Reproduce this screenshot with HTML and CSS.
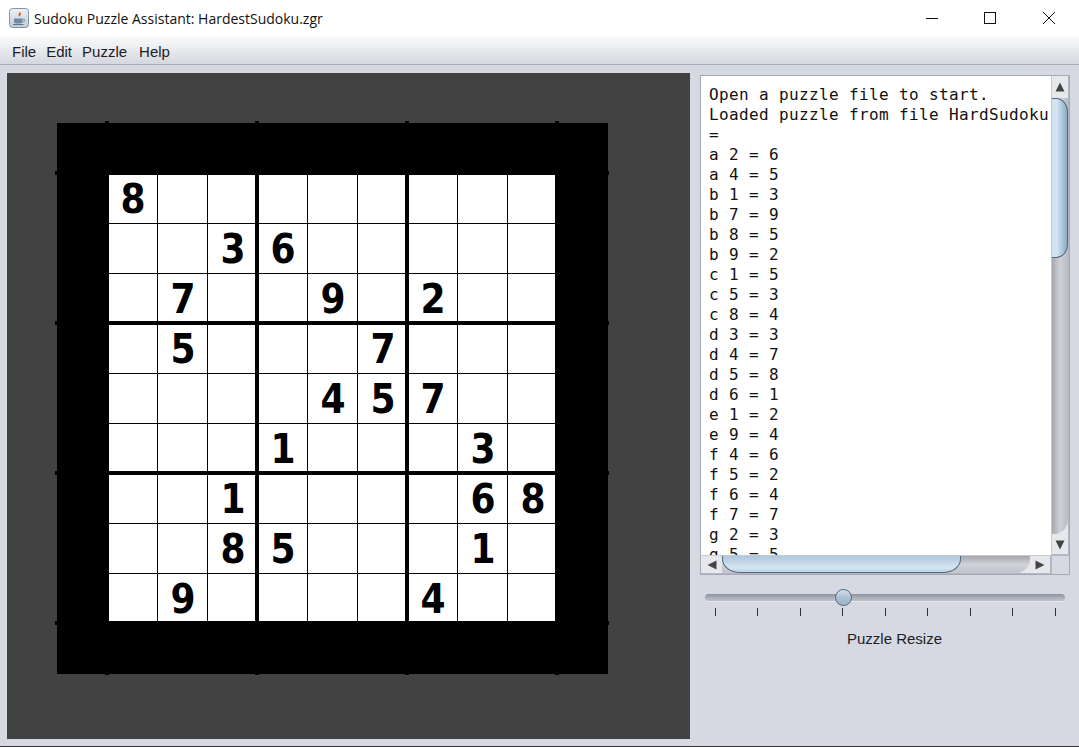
FILE: index.html
```html
<!DOCTYPE html>
<html lang="en">
<head>
<meta charset="utf-8">
<title>Sudoku Puzzle Assistant: HardestSudoku.zgr</title>
<link rel="stylesheet" href="styles.css">
</head>
<body>
<div class="window">
  <header class="titlebar">
    <svg class="app-icon" width="20" height="20" viewBox="0 0 20 20">
      <defs><linearGradient id="tile" x1="0" y1="0" x2="0" y2="1"><stop offset="0" stop-color="#eef1f5"/><stop offset="1" stop-color="#c3cbd6"/></linearGradient></defs>
      <rect x="0.5" y="0.5" width="19" height="19" rx="3" fill="url(#tile)" stroke="#7f94ab"/>
      <path d="M10.5 3c1.4 1.6-1.8 2.8-.8 4.6.3.5.6.9.8 1.3-.3-1.4 2.2-2.3 1.2-4-.3-.6-.8-1.200-1.200-1.900z" fill="#d9531e"/>
      <path d="M5 10.500h8.500v3c0 1.300-1 2-2.200 2H7.200C6 15.500 5 14.800 5 13.500z" fill="#6f8aa3"/>
      <path d="M13.500 11.200h1.300c1.200 0 1.200 2.400-.2 2.400h-1.200" fill="none" stroke="#6f8aa3"/>
      <path d="M4 16.500h10.500" stroke="#5a7590"/>
    </svg>
    <span class="title-text">Sudoku Puzzle Assistant: HardestSudoku.zgr</span>
    <div class="win-controls">
      <button class="win-btn" aria-label="Minimize"><svg width="14" height="14" viewBox="0 0 14 14"><path d="M1 7.500h12" stroke="#111" fill="none"/></svg></button>
      <button class="win-btn" aria-label="Maximize"><svg width="14" height="14" viewBox="0 0 14 14"><rect x="1.500" y="1.500" width="11" height="11" stroke="#111" fill="none"/></svg></button>
      <button class="win-btn win-close" aria-label="Close"><svg width="14" height="14" viewBox="0 0 14 14"><path d="M1 1l12 12M13 1L1 13" stroke="#111" fill="none"/></svg></button>
    </div>
  </header>
  <nav class="menubar">
    <span class="menu-item">File</span>
    <span class="menu-item">Edit</span>
    <span class="menu-item">Puzzle</span>
    <span class="menu-item">Help</span>
  </nav>
  <main class="content">
    <section class="puzzle-panel">
      <div class="board">
        <svg class="ticks" width="554" height="554" viewBox="0 0 554 554"><path d="M50 0h4v554h-4zM200 0h4v554h-4zM350 0h4v554h-4zM500 0h4v554h-4zM0 50h554v4H0zM0 200h554v4H0zM0 350h554v4H0zM0 500h554v4H0z" fill="#000"/></svg>
        <div class="grid">
          <div class="cell">8</div><div class="cell"></div><div class="cell"></div><div class="cell"></div><div class="cell"></div><div class="cell"></div><div class="cell"></div><div class="cell"></div><div class="cell"></div>
          <div class="cell"></div><div class="cell"></div><div class="cell">3</div><div class="cell">6</div><div class="cell"></div><div class="cell"></div><div class="cell"></div><div class="cell"></div><div class="cell"></div>
          <div class="cell"></div><div class="cell">7</div><div class="cell"></div><div class="cell"></div><div class="cell">9</div><div class="cell"></div><div class="cell">2</div><div class="cell"></div><div class="cell"></div>
          <div class="cell"></div><div class="cell">5</div><div class="cell"></div><div class="cell"></div><div class="cell"></div><div class="cell">7</div><div class="cell"></div><div class="cell"></div><div class="cell"></div>
          <div class="cell"></div><div class="cell"></div><div class="cell"></div><div class="cell"></div><div class="cell">4</div><div class="cell">5</div><div class="cell">7</div><div class="cell"></div><div class="cell"></div>
          <div class="cell"></div><div class="cell"></div><div class="cell"></div><div class="cell">1</div><div class="cell"></div><div class="cell"></div><div class="cell"></div><div class="cell">3</div><div class="cell"></div>
          <div class="cell"></div><div class="cell"></div><div class="cell">1</div><div class="cell"></div><div class="cell"></div><div class="cell"></div><div class="cell"></div><div class="cell">6</div><div class="cell">8</div>
          <div class="cell"></div><div class="cell"></div><div class="cell">8</div><div class="cell">5</div><div class="cell"></div><div class="cell"></div><div class="cell"></div><div class="cell">1</div><div class="cell"></div>
          <div class="cell"></div><div class="cell">9</div><div class="cell"></div><div class="cell"></div><div class="cell"></div><div class="cell"></div><div class="cell">4</div><div class="cell"></div><div class="cell"></div>
        </div>
      </div>
    </section>
    <aside class="side">
      <div class="scrollpane">
        <pre class="log">Open a puzzle file to start.
Loaded puzzle from file HardSudoku
=
a 2 = 6
a 4 = 5
b 1 = 3
b 7 = 9
b 8 = 5
b 9 = 2
c 1 = 5
c 5 = 3
c 8 = 4
d 3 = 3
d 4 = 7
d 5 = 8
d 6 = 1
e 1 = 2
e 9 = 4
f 4 = 6
f 5 = 2
f 6 = 4
f 7 = 7
g 2 = 3
g 5 = 5</pre>
        <div class="vbar">
          <div class="vbtn"><svg width="10" height="10" viewBox="0 0 10 10"><path d="M5 0.500L9.500 9.500H.5z" fill="#444"/></svg></div>
          <div class="vtrack"><div class="vthumb"></div></div>
          <div class="vbtn vbtn-down"><svg width="10" height="10" viewBox="0 0 10 10"><path d="M5 9.500L9.500 .5H.5z" fill="#444"/></svg></div>
        </div>
        <div class="hbar">
          <div class="hbtn"><svg width="10" height="10" viewBox="0 0 10 10"><path d="M.5 5L9.500 .5v9z" fill="#444"/></svg></div>
          <div class="htrack"><div class="hthumb"></div></div>
          <div class="hbtn hbtn-right"><svg width="10" height="10" viewBox="0 0 10 10"><path d="M9.500 5L.5 .5v9z" fill="#444"/></svg></div>
        </div>
        <div class="corner"></div>
      </div>
      <div class="slider">
        <div class="slider-track"><div class="slider-thumb"></div></div>
        <div class="slider-ticks"><i></i><i></i><i></i><i></i><i></i><i></i><i></i><i></i><i></i></div>
      </div>
      <div class="slider-label">Puzzle Resize</div>
    </aside>
  </main>
</div>
</body>
</html>
```
FILE: styles.css
```css
* { box-sizing: border-box; }
html, body { margin: 0; padding: 0; }
body { width: 1079px; height: 747px; overflow: hidden; background: #d6d9e2; }
.window { display: flex; flex-direction: column; height: 747px; border-bottom: 1px solid #333; color: #111; }

.titlebar { display: flex; align-items: center; height: 37px; flex: none; background: #fff; padding-left: 9px; }
.app-icon { flex: none; margin-top: -1px; }
.title-text { margin-left: 5px; font: 14px "Open Sans", "Liberation Sans", sans-serif; color: #111; white-space: nowrap; margin-top: -1px; }
.win-controls { margin-left: auto; display: flex; margin-top: -2px; }
.win-btn { width: 58px; height: 30px; padding: 0; border: 0; background: none; display: flex; align-items: center; justify-content: center; }
.win-close { width: 60px; }

.menubar { display: flex; height: 28px; flex: none; align-items: center; padding: 2px 0 0 12px; gap: 10px; background: linear-gradient(#f8f9f9, #f1f2f4 25%, #d4d7de); border-bottom: 1px solid #a9adb9; font: 15px "Liberation Sans", sans-serif; color: #1c1c24; }
.menu-item:last-child { margin-left: 2px; }

.content { flex: 1; display: flex; min-height: 0; padding: 8px 0 7px 7px; }
.puzzle-panel { width: 683px; height: 666px; flex: none; background: #424242; padding: 50px 0 0 50px; }
.board { position: relative; width: 551px; height: 551px; background: #000; padding: 52px 0 0 52px; }
.ticks { position: absolute; left: -2px; top: -2px; }
.grid { position: relative; width: 446px; height: 446px; display: grid; background: #fff; grid-template-columns: 49px 50px 51px 49px 50px 51px 49px 50px 47px; grid-template-rows: 49px 50px 51px 49px 50px 51px 49px 50px 47px; }
.cell { display: flex; align-items: center; justify-content: center; border-right: 1px solid #000; border-bottom: 1px solid #000; font: bold 40px "DejaVu Sans", sans-serif; font-stretch: condensed; color: #000; line-height: 1; overflow: hidden; }
.cell:nth-child(3n+2) { padding-left: 1px; }
.cell:nth-child(9n+3), .cell:nth-child(9n+6) { border-right-width: 4px; padding-left: 3px; }
.cell:nth-child(9n) { border-right: 0; padding-left: 3px; }
.cell:nth-child(n+19):nth-child(-n+27), .cell:nth-child(n+46):nth-child(-n+54) { border-bottom-width: 4px; padding-top: 3px; }
.cell:nth-child(n+73) { border-bottom: 0; padding-top: 3px; }

.side { flex: 1; min-width: 0; padding: 2px 9px 0 10px; }
.scrollpane { display: grid; grid-template-columns: 350px 18px; grid-template-rows: 479px 19px; width: 370px; height: 500px; border: 1px solid #a5a9b6; background: #d6d9e2; }
.log { margin: 0; padding: 9px 0 0 8px; background: #fff; overflow: hidden; font: 16px/20px "DejaVu Sans Mono", monospace; letter-spacing: .37px; color: #111; white-space: pre; }

.vbar { display: flex; flex-direction: column; background: #e6e8ec; border-left: 1px solid #c6c9d1; border-right: 1px solid #b4b8c3; overflow: hidden; }
.vbtn { flex: none; height: 22px; display: flex; justify-content: center; padding-top: 6px; background: #e6e8ec; }
.vbtn-down { height: 21px; padding-top: 6px; border-bottom: 1px solid #b4b8c3; background: #e6e8ec; }
.vtrack { flex: 1; background: linear-gradient(90deg, #a6a8ae, #cfd1d7 50%, #b9bbc3); border-bottom-right-radius: 14px; }
.vthumb { height: 160px; margin-left: -12px; border: 1.500px solid #4f6980; border-radius: 0 12px 12px 0 / 0 14px 14px 0; background: linear-gradient(90deg, #c0d5e8, #d6e5f2 60%, #a8c2d8 85%, #8ea9c1); }

.hbar { display: flex; background: #e6e8ec; border-top: 1px solid #c6c9d1; border-bottom: 1px solid #b4b8c3; overflow: hidden; }
.hbtn { flex: none; width: 21px; display: flex; align-items: center; justify-content: center; background: #e6e8ec; }
.hbtn-right { width: 21px; border-right: 1px solid #b4b8c3; }
.htrack { flex: 1; background: linear-gradient(#a6a8ae, #cfd1d7 50%, #c3c5cc); border-bottom-right-radius: 14px; }
.hthumb { width: 239px; height: 21px; margin-top: -4px; border: 1.500px solid #4f6980; border-radius: 0 0 18px 18px / 0 0 14px 14px; background: linear-gradient(#a8c2d8, #b4cade 25%, #d6e5f2 75%, #c0d5e8); }
.corner { background: #d6d9e2; border-left: 1px solid #b4b8c3; border-top: 1px solid #b4b8c3; }

.slider { margin: 19px 0 0 5px; }
.slider-track { position: relative; width: 360px; height: 7px; border-radius: 4px; background: linear-gradient(#8c91a0, #aeb2bd 60%, #bcc0ca); box-shadow: 0 1px 0 #e6e8ee; }
.slider-thumb { position: absolute; left: 130px; top: -5px; width: 17px; height: 17px; border-radius: 50%; border: 1.500px solid #50677e; background: linear-gradient(#d3e0ec, #a9bfd3 55%, #9db5ca); }
.slider-ticks { display: flex; justify-content: space-between; width: 340.6px; height: 8px; margin: 7px 0 0 10px; }
.slider-ticks i { display: block; width: 1px; height: 8px; background: #333; }
.slider-label { margin-top: 14px; padding-left: 147px; font: 15px/18px "Liberation Sans", sans-serif; color: #1c1c24; }
```
